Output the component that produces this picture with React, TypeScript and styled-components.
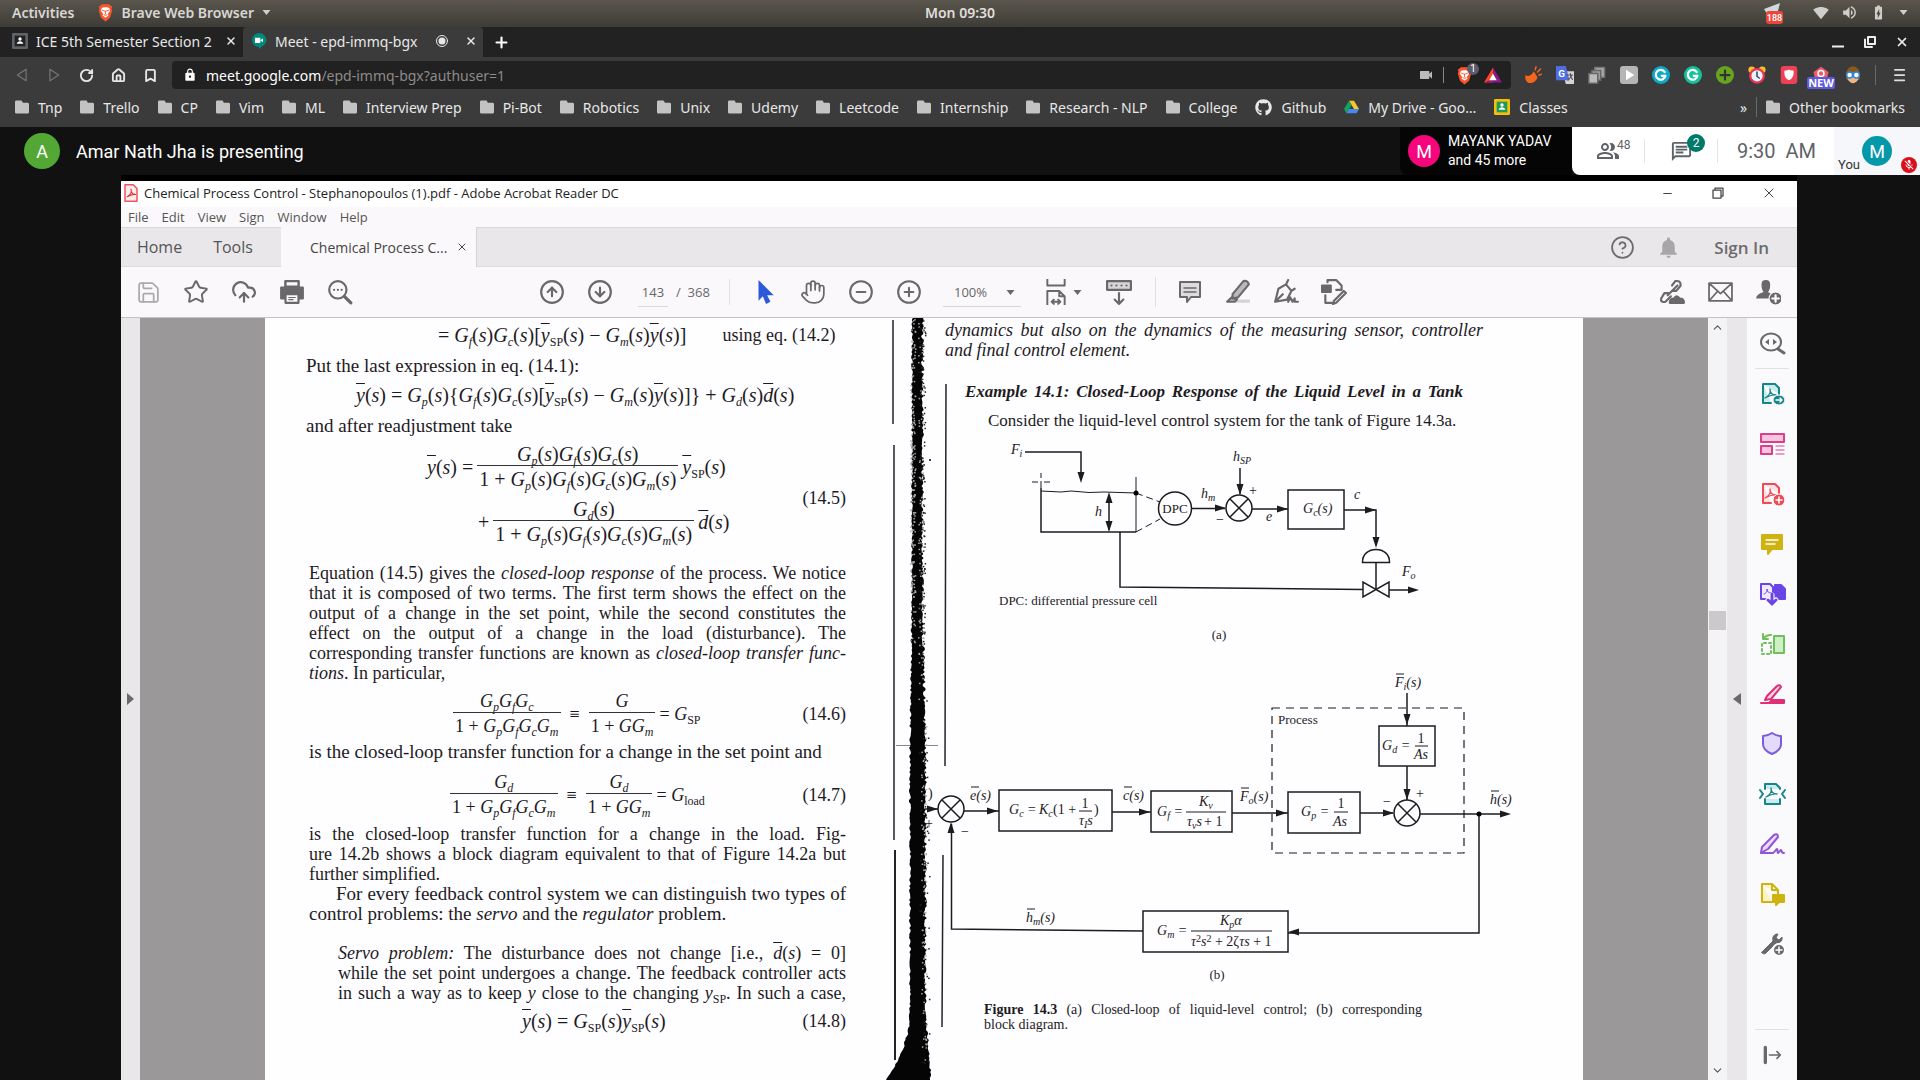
import React from "react";
import styled, { createGlobalStyle } from "styled-components";
import { FaGithub } from "react-icons/fa";
import {
  MdOutlineChat, MdOutlinePeopleAlt, MdMicOff, MdVideocam, MdLock, MdNotifications,
  MdSignalWifi4Bar, MdVolumeUp, MdBatteryChargingFull,
} from "react-icons/md";
import {
  Save, Star, CloudUpload, CircleArrowUp, CircleArrowDown, Hand, CircleMinus, CirclePlus,
  CircleHelp, X, Minus, ChevronUp, ChevronDown, Plus, House, Bookmark, RotateCw,
} from "lucide-react";

const ui = `"Noto Sans", "Open Sans", sans-serif`;
const segoe = `"Open Sans", "Noto Sans", sans-serif`;
const roboto = `Roboto, "Liberation Sans", sans-serif`;
const serif = `"Liberation Serif", "Times New Roman", serif`;

const Global = createGlobalStyle`
  * { box-sizing: border-box; }
  body { margin: 0; background: #111; font-family: ${ui}; }
  button, input, select { font: inherit; color: inherit; }
  button { border: 0; padding: 0; margin: 0; background: none; cursor: pointer; }
  svg { display: block; flex: none; }
`;

const Screen = styled.div`
  display: flex; flex-direction: column; height: 100vh; overflow: hidden;
`;
const Row = styled.div<{ gap?: number }>`
  display: flex; align-items: center; gap: ${(p) => p.gap ?? 0}px;
`;
const Spacer = styled.div`flex: 1;`;

/* ---------- desktop bar ---------- */
const DesktopBar = styled.header`
  height: 27px; flex: none; display: grid; grid-template-columns: 1fr auto 1fr; align-items: center;
  padding: 0 12px 2px; background: linear-gradient(#5a564d, #3e3c37);
  color: #e0dfdc; font-size: 14px; font-weight: 600; white-space: nowrap;
`;
const DesktopSide = styled.div<{ end?: boolean }>`
  display: flex; align-items: center; gap: 24px; justify-content: ${(p) => (p.end ? "flex-end" : "flex-start")};
  color: #d8d7d4;
`;
const DesktopApp = styled.button`display: flex; align-items: center; gap: 8px; font-weight: 600;`;
const DesktopButton = styled.button`font-weight: 600;`;
const Status = styled(Row)`color: #cfcecb;`;

/* ---------- browser chrome ---------- */
const TabStrip = styled.div`
  height: 30px; flex: none; display: flex; align-items: stretch; background: #222; color: #e8e8e8; font-size: 14px;
  white-space: nowrap;
`;
const Tab = styled.div<{ active?: boolean }>`
  width: ${(p) => (p.active ? 240 : 243)}px; display: flex; align-items: center; gap: 8px; padding: 0 6px 2px ${(p) => (p.active ? 8 : 12)}px;
  background: ${(p) => (p.active ? "#3b3b3b" : "transparent")}; border-radius: 4px 4px 0 0;
  button { display: flex; }
`;
const TabTitle = styled.span`flex: 1; overflow: hidden;`;
const NewTab = styled.button`width: 36px; display: grid; place-items: center; color: #fff;`;
const WindowControls = styled.div`
  margin-left: auto; display: flex; align-items: center; gap: 16px; padding-right: 10px;
  button { width: 16px; display: grid; place-items: center; color: #eee; }
`;
const NavBar = styled.nav`
  height: 36px; flex: none; display: flex; align-items: center; background: #3b3b3b; padding: 0 14px 0 14px; color: #ddd;
`;
const NavButton = styled.button<{ dim?: boolean }>`
  width: 16px; height: 28px; margin-right: 16px; display: grid; place-items: center; color: ${(p) => (p.dim ? "#777" : "#e6e6e6")};
`;
const AddressBar = styled.div`
  flex: 1; height: 28px; margin-left: -2px; display: flex; align-items: center; gap: 9px; padding: 0 9px 0 11px; background: #212121; border-radius: 4px;
  font-size: 14px; color: #fff;
`;
const Address = styled.label`
  flex: 1; display: grid; align-items: center;
  > * { grid-area: 1 / 1; }
  span { color: #8b8b8b; pointer-events: none; }
  b { color: #fff; font-weight: 400; }
`;
const AddressInput = styled.input`
  border: 0; outline: 0; background: transparent; padding: 0; color: transparent; width: 100%;
`;
const Rule = styled.i<{ h: number; c: string }>`
  width: 1px; height: ${(p) => p.h}px; background: ${(p) => p.c}; flex: none;
`;
const Extensions = styled.div`
  display: flex; align-items: center; gap: 14px; padding: 0 13px;
  button { width: 18px; height: 20px; display: grid; place-items: center; }
`;
const Shield = styled.button`
  position: relative; width: 22px; height: 22px; display: grid; place-items: center; color: #fb542b;
`;
const ShieldCount = styled.span`
  position: absolute; left: 14px; top: -1px; width: 12px; height: 12px; border-radius: 6px; background: #5d5b6b; color: #fff;
  font: 10px/12px ${roboto}; text-align: center;
`;
const NewTag = styled.span`
  position: absolute; left: -5px; bottom: -4px; width: 28px; height: 12px; border-radius: 2px; background: #5a59e0; color: #fff;
  font: 700 11px/12px ${ui}; text-align: center;
`;
const TagButton = styled.button`position: relative;`;
const BookmarkBar = styled.nav`
  height: 34px; flex: none; display: flex; align-items: center; padding: 0 15px 6px 15px; gap: 18px; background: #3b3b3b;
  color: #e8e8e8; font-size: 14px; white-space: nowrap;
`;
const BookmarkLink = styled.a`
  display: flex; align-items: center; gap: 9px; color: inherit; text-decoration: none;
`;

/* ---------- meeting bar ---------- */
const MeetBar = styled.section`
  height: 48px; flex: none; display: flex; align-items: center; padding-left: 24px; background: #111; font-family: ${roboto}; color: #fff;
`;
const Avatar = styled.span<{ size: number; tint: string }>`
  width: ${(p) => p.size}px; height: ${(p) => p.size}px; flex: none; border-radius: 50%; background: ${(p) => p.tint}; color: #fff;
  display: grid; place-items: center; font-size: 18px;
`;
const Presenter = styled.span`margin-left: 16px; font-size: 18px;`;
const Speaker = styled.div`
  margin-left: auto; width: 172px; height: 48px; display: flex; align-items: center; gap: 8px; padding-left: 8px; background: #050505;
  border-bottom-left-radius: 8px; font-size: 14px; line-height: 19px; white-space: nowrap;
`;
const MeetPanel = styled.div`
  height: 48px; display: flex; align-items: center; background: #fff; color: #5f6368; border-bottom-left-radius: 8px;
`;
const MeetButton = styled.button<{ w: number }>`
  position: relative; width: ${(p) => p.w}px; height: 48px; display: grid; place-items: center;
`;
const PeopleCount = styled.span`position: absolute; left: 45px; top: 10px; font-size: 12px; line-height: 16px;`;
const ChatCount = styled.span`
  position: absolute; left: 42px; top: 7px; width: 18px; height: 18px; border-radius: 9px; background: #00796b; color: #fff;
  font-size: 12px; line-height: 18px; text-align: center;
`;
const Clock = styled.time`width: 116px; padding-left: 19px; font-size: 20px; white-space: pre;`;
const SelfTile = styled.div`
  position: relative; width: 86px; height: 48px; display: flex; align-items: center; padding-left: 28px; background: #f5f7fa;
`;
const SelfName = styled.span`position: absolute; left: 4px; bottom: 1px; font-size: 13px; line-height: 18px; color: #333;`;
const Muted = styled.span`
  position: absolute; right: 3px; bottom: 2px; width: 16px; height: 16px; border-radius: 8px; background: #d90f1c; color: #fff;
  display: grid; place-items: center;
`;

/* ---------- PDF reader ---------- */
const Stage = styled.main`
  flex: 1; min-height: 0; display: flex; flex-direction: column; margin: 0 123px 0 121px; border-top: 6px solid #000;
  font-family: ${segoe}; color: #333; background: #faf8fb;
`;
const ReaderTitle = styled.div`
  height: 26px; flex: none; display: flex; align-items: center; gap: 6px; padding: 0 20px 2px 3px; background: #fff; font-size: 13px; color: #222;
`;
const ReaderControls = styled.div`
  margin-left: auto; display: flex; gap: 35px; color: #444;
  button { width: 16px; display: grid; place-items: center; }
`;
const MenuBar = styled.nav`
  height: 20px; flex: none; display: flex; align-items: center; gap: 13px; padding-left: 7px; font-size: 13px; color: #555;
`;
const ReaderTabs = styled.div`
  height: 40px; flex: none; display: flex; align-items: stretch; background: #e9e7ea; border-top: 1px solid #d9d7da; border-bottom: 1px solid #dddbde;
  font-size: 16px; color: #555; white-space: nowrap;
`;
const MainTab = styled.button<{ w: number }>`width: ${(p) => p.w}px; text-align: center;`;
const FileTab = styled.div`
  width: 196px; margin: -1px 0 -1px 13px; display: flex; align-items: center; justify-content: space-between; padding: 0 8px 0 29px;
  background: #faf8fb; border-right: 1px solid #d5d3d6; font-size: 14px; color: #444;
  button { display: flex; }
`;
const AccountArea = styled.div`
  margin-left: auto; display: flex; align-items: center; gap: 21px; padding-right: 28px; color: #6d6b6e; font-size: 17px; font-weight: 600;
  button { display: flex; }
  button:last-child { margin-left: 12px; }
`;
const Toolbar = styled.div`
  height: 51px; flex: none; display: flex; align-items: center; padding: 0 15px 0 13px; border-bottom: 1px solid #c4c2c5; color: #6a686b;
`;
const Tools = styled.div<{ left?: number }>`
  display: flex; align-items: center; gap: 20px; margin-left: ${(p) => p.left ?? 0}px;
  button { width: 28px; height: 28px; display: grid; place-items: center; }
`;
const PageBox = styled.label`
  display: flex; align-items: center; gap: 8px; margin-left: 24px; width: 91px; font-size: 13px; white-space: nowrap;
`;
const PageInput = styled.input`
  width: 30px; height: 30px; border: 0; border-bottom: 1px solid #ddd6dd; background: none; text-align: center; padding: 0; color: #666;
`;
const Zoom = styled.label`
  display: grid; align-items: center; width: 78px; margin: 0 22px 0 20px; font-size: 13px;
  > * { grid-area: 1 / 1; }
  svg { justify-self: end; pointer-events: none; margin-right: 6px; }
`;
const ZoomSelect = styled.select`
  appearance: none; height: 30px; border: 0; border-bottom: 1px solid #d8d5d9; background: none; padding: 0 0 0 11px; color: #666;
`;
const Body = styled.div`flex: 1; min-height: 0; display: flex; overflow: hidden;`;
const Rail = styled.button<{ w: number }>`
  width: ${(p) => p.w}px; flex: none; background: #eae7eb; display: grid; place-items: center;
`;
const Canvas = styled.div`
  flex: 1; min-width: 0; display: flex; justify-content: center; background: #9a9899; overflow: hidden;
`;
const ScrollTrack = styled.div`
  width: 19px; flex: none; display: flex; flex-direction: column; align-items: center; padding: 3px 0; background: #f4f3f5; color: #555;
`;
const ScrollThumb = styled.i`width: 17px; height: 19px; background: #cbc9cc; margin: 277px 0 auto;`;
const SideTools = styled.aside`
  width: 50px; flex: none; display: flex; flex-direction: column; align-items: center; background: #faf9fb; color: #6a686b;
  button { height: 50px; width: 50px; flex: none; display: grid; place-items: center; }
  hr { width: 34px; height: 1px; border: 0; margin: 0; background: #e2e0e3; flex: none; }
`;

/* ---------- scanned book ---------- */
const Book = styled.article`
  flex: 0 1 1318px; min-width: 0; display: flex; background: #fefdff; color: #1d1b1e; font: 18px/20px ${serif};
`;
const LeftPage = styled.section`width: 620px; flex: none; padding: 7px 39px 0 41px;`;
const RightPage = styled.section`width: 578px; flex: none; padding: 2px 40px 0 0;`;
const Para = styled.p<{ top?: number; indent?: number; size?: number }>`
  margin: ${(p) => p.top ?? 0}px 0 0 ${(p) => p.indent ?? 0}px; white-space: nowrap; font-size: ${(p) => p.size ?? 19}px;
`;
const Line = styled.span<{ full?: boolean; indent?: number }>`
  display: block; padding-left: ${(p) => p.indent ?? 0}px; text-align-last: ${(p) => (p.full ? "justify" : "left")};
`;
const Equation = styled.div<{ top: number; left: number; size?: number }>`
  display: flex; align-items: center; gap: 4px; margin-top: ${(p) => p.top}px; padding-left: ${(p) => p.left}px; white-space: nowrap;
  font-size: ${(p) => p.size ?? 18}px;
`;
const EqNote = styled.span`margin-left: 32px; font-size: 18px;`;
const EqNumber = styled.span`margin-left: auto; font-size: 18px;`;
const EqPair = styled.div`
  display: flex; align-items: center; justify-content: space-between;
  > ${EqNumber} { padding-top: 14px; }
`;
const Frac = styled.span`
  display: inline-flex; flex-direction: column; align-items: center; line-height: 22px;
  > :first-child { height: 22px; }
  > :last-child { border-top: 1px solid #333; padding: 2px 2px 0; align-self: stretch; text-align: center; height: 26px; }
`;
const Sub = styled.sub`font-size: 12px; line-height: 0; vertical-align: -4px;`;
const Over = styled.i`text-decoration: overline; text-decoration-thickness: 1px;`;
const Gap = styled.span<{ w: number }>`width: ${(p) => p.w}px;`;
const Heading = styled.h2`
  margin: 22px 0 0 20px; font: italic 700 17px/20px ${serif}; white-space: nowrap; width: 498px; text-align-last: justify;
`;
const Caption = styled.figcaption`
  margin: 2px 0 0 39px; width: 438px; font-size: 14px; line-height: 15px; white-space: nowrap;
`;
const Figure = styled.figure`margin: 0; svg { overflow: visible; font-family: ${serif}; }`;

const G = ({ s, arg }: { s?: string; arg?: boolean }) => (
  <><i>G</i>{s && <Sub>{s === "SP" || s === "load" ? s : <i>{s}</i>}</Sub>}{arg && <>(<i>s</i>)</>}</>
);
const Y = ({ sp }: { sp?: boolean }) => (<><Over>y</Over>{sp && <Sub>SP</Sub>}(<i>s</i>)</>);
const D = () => (<><Over>d</Over>(<i>s</i>)</>);

/* rough ink edge of the book gutter */
const noise = (n: number) => { const v = Math.sin(n * 127.1) * 43758.5453; return v - Math.floor(v); };
const gutterShape = () => {
  const left: string[] = [];
  const right: string[] = [];
  for (let y = 318; y <= 1080; y += 2) {
    const t = y > 1010 ? (y - 1010) / 70 : 0;
    const grow = Math.min(1, Math.max(0, (y - 600) / 150));
    left.push(`${(911 - grow * 2 - t * t * 24 + noise(y) * 2).toFixed(1)},${y}`);
    right.unshift(`${(921 + grow * 3 + t * 5 + noise(y + 0.5) * 3).toFixed(1)},${y}`);
  }
  return [...left, ...right].join(" ");
};
const specks = Array.from({ length: 520 }, (_, i) => {
  const y = 318 + noise(i + 3) * (i % 2 ? 750 : 330);
  const light = i % 3 !== 0;
  return { x: light ? 910 + noise(i * 2.3) * 5 + (i % 2) * (y > 700 ? 11 : 8) : 919 + noise(i * 3.7) * (y > 700 ? 10 : 6), y, light };
});
const Gutter = () => (
  <svg width="60" height="762" viewBox="885 318 60 762" overflow="visible" aria-hidden="true">
    <g stroke="#242226" strokeWidth="1.500" fill="none">
      <path d="M893 320V424M894 445V840" />
      <path d="M895 850V1060" strokeWidth="2" />
      <path d="M946 384 945 766M943 855 942 1027" />
      <path d="M896 745.500H938" strokeWidth="1" stroke="#888" />
    </g>
    <polygon points={gutterShape()} fill="#060506" />
    {specks.map((s, i) => <rect key={i} x={s.x} y={s.y} width="1.500" height="1.500" fill={s.light ? "#aaa" : "#222"} />)}
    <circle cx="930" cy="460" r="1" />
  </svg>
);

/* maths label inside the diagrams */
const L = ({ x, y, v, s, r, bar, size = 14 }: { x: number; y: number; v: string; s?: string; r?: string; bar?: boolean; size?: number }) => (
  <>
    <text x={x} y={y} fontSize={size} fontStyle="italic">
      {v}{s && <tspan dy="3" fontSize="10">{s}</tspan>}{r && <tspan dy={s ? -3 : 0}>{r}</tspan>}
    </text>
    {bar && <path d={`M${x + 1} ${y - 13}h8`} stroke="#1d1b1e" />}
  </>
);
const R = ({ x, y, children, size = 14, mid }: { x: number; y: number; children: React.ReactNode; size?: number; mid?: boolean }) => (
  <text x={x} y={y} fontSize={size} textAnchor={mid ? "middle" : "start"}>{children}</text>
);
const Head = ({ x, y, a = 0 }: { x: number; y: number; a?: number }) => (
  <path d="M0 0-11-3.500V3.500Z" fill="#1d1b1e" transform={`translate(${x} ${y}) rotate(${a})`} />
);
const Junction = ({ x, y }: { x: number; y: number }) => (
  <g><circle cx={x} cy={y} r="13" fill="#fefdff" /><path d={`M${x - 9} ${y - 9}l18 18m0-18l-18 18`} /></g>
);
const Diagram = () => (
  <svg width="570" height="569" viewBox="945 431 570 569" role="img" aria-label="Closed-loop liquid-level control">
    <g fill="none" stroke="#1d1b1e" strokeWidth="1.500">
      <path d="M1025 452H1081V475M1041 488V532H1136M1109 496V530M1120 532V587L1363 589.500" />
      <path d="M1136 477V532M1041 473v5m0 3v7M1032 482h6m6 0h6" strokeWidth="1" />
      <path d="M1041 491l20 1 10-1 18 1.500 15-.5 32 1" strokeWidth="1" />
      <path d="M1136 493l24 9M1136 532l24-13" strokeDasharray="7 4" strokeWidth="1" />
      <circle cx="1175" cy="508.500" r="16.500" />
      <path d="M1192 508.500H1225M1240 468V494M1252 509H1288M1344 510H1376V545M1376 562V590M1389 590H1415" />
      <rect x="1288" y="490" width="56" height="39" />
      <path d="M1362.500 562.500C1362 545 1390 545 1389.500 562.500ZM1363 582v15l26-15v15Z" />
      <Junction x={1239} y={508} />
      {/* block diagram */}
      <path d="M1272 708H1464V853H1272Z" strokeDasharray="8 6" strokeWidth="1.200" />
      <path d="M1407 693V726M1407 766V800M964 811H999M1112 812H1151M1232 813H1288M1360 813H1393M1420 814H1505M1479 814V933H1288M1143 931L951.500 929V824M925 809H938" />
      <rect x="1379" y="726" width="56" height="40" />
      <rect x="999" y="790" width="113" height="41" />
      <rect x="1151" y="791" width="81" height="41" />
      <rect x="1288" y="792" width="72" height="41" />
      <rect x="1143" y="911" width="145" height="41" />
      <Junction x={951} y={809} />
      <Junction x={1407} y={813} />
      <path d="M1415 746h13M1079 811h13M1186 812h40M1334 812h14M1191 931h81" strokeWidth="1" />
    </g>
    <circle cx="1136" cy="493" r="2.500" /><circle cx="1479" cy="814" r="2.500" />
    <Head x={1081} y={483} a={90} /><Head x={1109} y={492} a={-90} /><Head x={1109} y={532} a={90} />
    <Head x={1226} y={508} /><Head x={1240} y={495} a={90} /><Head x={1288} y={509} /><Head x={1376} y={510} />
    <Head x={1376} y={548} a={90} /><Head x={1419} y={590} /><Head x={1407} y={725} a={90} /><Head x={1407} y={800} a={90} />
    <Head x={998} y={811} /><Head x={1150} y={812} /><Head x={1287} y={813} /><Head x={1394} y={813} /><Head x={1511} y={814} />
    <Head x={1288} y={932} a={180} /><Head x={951} y={822} a={-90} /><Head x={938} y={809} />
    <g fill="#1d1b1e">
      <L x={1011} y={454} v="F" s="i" /><L x={1095} y={516} v="h" /><L x={1233} y={461} v="h" s="SP" />
      <L x={1201} y={498} v="h" s="m" /><L x={1266} y={521} v="e" /><L x={1354} y={499} v="c" />
      <L x={1303} y={513} v="G" s="c" r="(s)" /><L x={1402} y={576} v="F" s="o" />
      <R x={1175} y={513} size={13} mid>DPC</R>
      <R x={1249} y={495}>+</R><R x={1216} y={524}>−</R>
      <R x={999} y={605} size={13}>DPC: differential pressure cell</R>
      <R x={1219} y={639} size={13} mid>(a)</R>
      <R x={1278} y={724} size={13}>Process</R>
      <R x={1416} y={798}>+</R><R x={1383} y={806}>−</R><R x={961} y={836}>−</R>
      <R x={928} y={798}>)</R><R x={925} y={828}>+</R>
      <R x={1217} y={979} size={13} mid>(b)</R>
      <L x={1382} y={750} v="G" s="d" r=" =" /><R x={1421} y={743} mid>1</R><L x={1414} y={759} v="As" />
      <L x={1009} y={814} v="G" s="c" r=" = " /><L x={1039} y={814} v="K" s="c" /><R x={1053} y={814}>(1 +</R>
      <R x={1085} y={808} mid>1</R><L x={1079} y={825} v="τ" s="I" r="s" /><R x={1094} y={814}>)</R>
      <L x={1157} y={816} v="G" s="f" r=" =" /><L x={1199} y={806} v="K" s="v" /><L x={1187} y={826} v="τ" s="v" r="s" /><R x={1204} y={826}>+ 1</R>
      <L x={1301} y={816} v="G" s="p" r=" =" /><R x={1341} y={808} mid>1</R><L x={1333} y={826} v="As" />
      <L x={1157} y={935} v="G" s="m" r=" =" /><L x={1220} y={925} v="K" s="p" r="α" />
      <text x="1191" y="946" fontSize="14"><tspan fontStyle="italic">τ</tspan><tspan dy="-4" fontSize="10">2</tspan><tspan dy="4" fontStyle="italic">s</tspan><tspan dy="-4" fontSize="10">2</tspan><tspan dy="4"> + 2ζ</tspan><tspan fontStyle="italic">τs</tspan> + 1</text>
      <L bar x={1395} y={687} v="F" s="i" r="(s)" /><L bar x={970} y={800} v="e" r="(s)" /><L bar x={1123} y={800} v="c" r="(s)" />
      <L bar x={1240} y={801} v="F" s="o" r="(s)" /><L bar x={1490} y={804} v="h" r="(s)" /><L bar x={1026} y={922} v="h" s="m" r="(s)" />
    </g>
  </svg>
);

/* ---------- small drawings ---------- */
const Ico = ({ children, w = 18, h = w, box = "0 0 24 24", label }: { children: React.ReactNode; w?: number; h?: number; box?: string; label?: string }) => (
  <svg width={w} height={h} viewBox={box} fill="none" stroke="currentColor" strokeWidth="2" strokeLinejoin="round" strokeLinecap="round" aria-label={label}>{children}</svg>
);
const Disc = ({ c, children }: { c: string; children: React.ReactNode }) => (
  <Ico><circle cx="12" cy="12" r="12" fill={c} stroke="none" />{children}</Ico>
);
const Caret = ({ tint = "#6a686b" }: { tint?: string }) => <svg width="9" height="5" viewBox="0 0 8 5" fill={tint}><path d="M0 0h8L4 5Z" /></svg>;
const Brave = () => (
  <Ico w={15} h={19} box="0 0 20 24" label="Brave">
    <path d="M5 1h10l2 2 2 1-1 3 1 2-3 10-6 5-6-5L1 9l1-2-1-3 2-1Z" fill="#fb542b" stroke="none" />
    <path d="M5 6l3-1h4l3 1 1 4-3 4 1 2-4 3-4-3 1-2-3-4Z" fill="#fff" stroke="none" />
    <path d="M6 9l3 1.200M14 9l-3 1.200M10 10v4M8 15l2 1 2-1" stroke="#fb542b" strokeWidth="1.200" />
  </Ico>
);
const Classroom = ({ frame, board }: { frame: string; board: string }) => (
  <Ico w={16} label="Classroom"><rect width="24" height="24" rx="2" fill={frame} stroke="none" /><path d="M4 4h16v16H4Z" fill={board} stroke="none" /><circle cx="12" cy="9" r="2.500" fill="#fff" stroke="none" /><path d="M7 16c1-5 9-5 10 0Z" fill="#fff" stroke="none" /></Ico>
);
const PdfMark = ({ x = 6, y = 7 }: { x?: number; y?: number }) => (
  <path d={`M${x} ${y + 9}c4-2 6-5 5-9c0 5 3 6 6 6c-4-1-7 1-11 3`} strokeWidth="1.300" />
);
const Folder = () => <svg width="14" height="14" viewBox="0 0 15 14" fill="#c3c3c3"><path d="M1.500 0H7l1.500 2.500h5Q15 2.500 15 4v8.500Q15 14 13.500 14h-12Q0 14 0 12.500v-11Q0 0 1.500 0Z" /></svg>;

const folders = ["Tnp", "Trello", "CP", "Vim", "ML", "Interview Prep", "Pi-Bot", "Robotics", "Unix", "Udemy", "Leetcode", "Internship", "Research - NLP", "College"];

const page = "M4 2h12l4 4v6M4 2v19h8";
const sideTools: [string, string, React.ReactNode][] = [
  ["Export PDF", "#16858a", <><path d={page} fill="#c9ecec" /><PdfMark /><ellipse cx="20" cy="18" rx="6" ry="5" fill="#16858a" stroke="#fff" strokeWidth="1" /><path d="M17 18h6m-2-2 2 2-2 2" stroke="#fff" strokeWidth="1.500" /></>],
  ["Edit PDF", "#d9408a", <><path d="M2 2h23v8H2ZM2 14h11v8H2Z" fill="#f9c4df" /><path d="M17 14h8m-8 4h8M17 22h8" strokeWidth="1.200" /></>],
  ["Create PDF", "#ee4a57", <><path d={page} fill="#fde3e5" /><PdfMark /><circle cx="20" cy="18" r="6" fill="#ee4a57" stroke="#fff" strokeWidth="1" /><path d="M17 18h6m-3-3v6" stroke="#fff" strokeWidth="1.500" /></>],
  ["Comment", "#cfb310", <><path d="M3 3h20v14H13l-4 5v-5H3Z" fill="#cfb310" /><path d="M7 8h12M7 12h9" stroke="#fff" strokeWidth="1.500" /></>],
  ["Combine Files", "#6c46e5", <><path d="M2 2h9l3 3v12H2Z" fill="#efeaff" /><path d="M5 12c3-1 3-3 3-5 0 3 2 4 4 4" strokeWidth="1" /><path d="M16 3h6l4 4v10H16Z" fill="#6c46e5" /><path d="M13 13v9m-4-4 4 4 4-4" stroke="#fff" strokeWidth="5" /><path d="M13 12v10m-4-4 4 4 4-4" strokeWidth="3" /></>],
  ["Organize Pages", "#6ec05a", <><path d="M15 4h10v17H15Z" fill="#cdf0c4" /><path d="M12 11H3v11h9Z" strokeDasharray="2 3" /><path d="M12 3c-4 0-6 1-8 4M4 2v5h5" /></>],
  ["Redact", "#de2f77", <><path d="m8 14 10-10q3-2 4 1L12 17l-6 1Z" fill="#fbd3e3" /><path d="M2 21h23v-3H13l-3 3" fill="#de2f77" /></>],
  ["Protect", "#7b5be0", <path d="M13 1c3 2 6 3 9 3v8c0 5-4 8-9 10c-5-2-9-5-9-10V4c3 0 6-1 9-3Z" fill="#e3dbfc" />],
  ["Compress PDF", "#16858a", <><path d="M6 7V2h11l4 4v1M6 17v5h15v-5" fill="#c9ecec" /><PdfMark x={7} y={6} /><path d="m1 8 3 4L1 16M26 8l-3 4 3 4" /></>],
  ["Fill & Sign", "#9156d6", <><path d="m3 15 12-12q4-2 4 2L9 17l-7 4Z" fill="#ead9fa" /><path d="M2 21h12c2-1 3-4 4-4s0 4 1 4 2-3 3-3 0 3 3 3" /></>],
  ["Send for Comments", "#cfb310", <><path d="M3 2h10l6 6v4M3 2v18h10M13 2v6h6" fill="#fbf3c0" /><path d="M14 13h11v7h-5l-3 3v-3h-3Z" fill="#cfb310" /></>],
  ["More Tools", "#6a686b", <><path d="m3 20 11-11c-1-4 1-7 5-7l-2 4 3 2 3-3c1 4-3 7-6 6L7 21c-2 2-5 0-4-1Z" fill="#6a686b" strokeWidth="1" /><circle cx="20" cy="18" r="6" fill="#6a686b" stroke="#fff" /><path d="M17 18h6m-3-3v6" stroke="#fff" strokeWidth="1.500" /></>],
];
const Tint = styled.button<{ tint: string }>`color: ${(p) => p.tint};`;

export default function App() {
  return (
    <Screen>
      <Global />
      <DesktopBar>
        <DesktopSide>
          <DesktopButton>Activities</DesktopButton>
          <DesktopApp><Brave />Brave Web Browser<Caret tint="#cfcecb" /></DesktopApp>
        </DesktopSide>
        <span>Mon 09:30</span>
        <DesktopSide end>
          <Status gap={12}>
            <Ico w={20} h={24} box="0 0 20 24" label="188 messages"><path d="M1 8 17 2l-2 8-9 6Z" fill="#cdd8e0" stroke="none" /><rect x="3" y="10" width="17" height="13" rx="3" fill="#f04438" stroke="none" /><text x="11.500" y="20" fontSize="9" fill="#fff" stroke="none" textAnchor="middle" fontFamily="Roboto">188</text></Ico>
            <Gap w={6} />
            <MdSignalWifi4Bar size={16} /><MdVolumeUp size={17} /><MdBatteryChargingFull size={17} /><Caret tint="#cfcecb" />
          </Status>
        </DesktopSide>
      </DesktopBar>

      <TabStrip>
        <Tab>
          <Classroom frame="#5f6368" board="#222" />
          <TabTitle>ICE 5th Semester Section 2</TabTitle>
          <button aria-label="Close tab"><X size={12} strokeWidth={3} /></button>
        </Tab>
        <Tab active>
          <Ico w={16} label="Meet"><path d="M12 0a11 11 0 0 1 11 11c0 6-6 9-11 13v-3A10.500 10.500 0 0 1 12 0Z" fill="#00897b" stroke="none" /><path d="M6 7h8v8H6Zm8 4 4-3v6Z" fill="#fff" stroke="none" /></Ico>
          <TabTitle>Meet - epd-immq-bgx</TabTitle>
          <Ico w={12} label="Recording"><circle cx="12" cy="12" r="11" /><circle cx="12" cy="12" r="7" fill="currentColor" stroke="none" /></Ico>
          <Gap w={1} />
          <button aria-label="Close tab"><X size={12} strokeWidth={3} /></button>
        </Tab>
        <NewTab aria-label="New tab"><Plus size={17} strokeWidth={3} /></NewTab>
        <WindowControls>
          <button aria-label="Minimise"><Ico w={12}><path d="M1 21h22" strokeWidth="4" /></Ico></button>
          <button aria-label="Restore"><Ico w={12}><path d="M8 2h14v14H8ZM2 7v15h14" strokeWidth="4" /></Ico></button>
          <button aria-label="Close"><X size={14} strokeWidth={3} /></button>
        </WindowControls>
      </TabStrip>

      <NavBar>
        <NavButton dim aria-label="Back"><Ico w={14}><path d="M19 2v20L4 12Z" /></Ico></NavButton>
        <NavButton dim aria-label="Forward"><Ico w={14}><path d="M5 2v20l15-10Z" /></Ico></NavButton>
        <NavButton aria-label="Reload"><RotateCw size={15} strokeWidth={3} /></NavButton>
        <NavButton aria-label="Home"><House size={15} strokeWidth={3} /></NavButton>
        <NavButton aria-label="Bookmark"><Bookmark size={15} strokeWidth={3} /></NavButton>
        <AddressBar>
          <MdLock size={14} />
          <Address>
            <span><b>meet.google.com</b>/epd-immq-bgx?authuser=1</span>
            <AddressInput aria-label="Address" />
          </Address>
          <MdVideocam size={16} color="#bbb" />
          <Rule h={16} c="#888" />
          <Shield aria-label="Brave Shields"><Brave /><ShieldCount>1</ShieldCount></Shield>
          <Ico w={18} label="Brave Rewards"><path d="M12 2 0 22h12V14l-4 5 4-7Z" fill="#ff4724" stroke="none" /><path d="m12 2 12 20H0l7-3h10L12 10Z" fill="#8a1a8c" stroke="none" /><path d="m12 10 5 9H7Z" fill="#fff" stroke="none" /></Ico>
        </AddressBar>
        <Extensions>
          <button aria-label="Alarm bulb"><Ico><path d="M2 12c4 3 9 0 11-5l5 8c-2 7-9 9-13 7-3-2-4-6-3-10Z" fill="#f4661b" stroke="none" /><path d="m15 5 1-4m2 7 4-4m-2 8 3-1" stroke="#f4661b" /></Ico></button>
          <button aria-label="Translate"><Ico><path d="M9 7h15v17H13Z" fill="#d5d5d5" stroke="none" /><path d="M0 0h13l5 19H0Z" fill="#4f6fe0" stroke="none" /><text x="3" y="14" fontSize="13" fontWeight="700" fill="#fff" stroke="none" fontFamily="Roboto">G</text><path d="M15 12h7m-3-2c0 5 1 6 3 8m-1-5-5 6" stroke="#555" strokeWidth="1.500" /></Ico></button>
          <button aria-label="Tabs"><Ico><path d="M9 2h13v13H9Z" fill="#aaa" stroke="#777" /><path d="M5 6h12v13H5Z" fill="#9a9a9a" stroke="#666" /><path d="M1 10h12v13H1Z" fill="#bbb" stroke="#666" /></Ico></button>
          <button aria-label="Player"><Ico><rect width="24" height="24" rx="4" fill="#b5b5b5" stroke="none" /><path d="M8 5v14l11-7Z" fill="#fff" stroke="none" /></Ico></button>
          {["#0fa9c7", "#15c39a"].map((c) => (
            <button key={c} aria-label="Grammar"><Disc c={c}><path d="M17 8a6.500 6.500 0 1 0 1 5h-5" stroke="#fff" strokeWidth="3" /></Disc></button>
          ))}
          <button aria-label="Add"><Disc c="#68a51f"><path d="M12 6v12M6 12h12" stroke="#333" strokeWidth="3" /></Disc></button>
          <button aria-label="Alarm"><Ico><circle cx="5" cy="5" r="4.500" fill="#fbbd2c" stroke="none" /><circle cx="19" cy="5" r="4.500" fill="#fbbd2c" stroke="none" /><circle cx="12" cy="13" r="9" fill="#e8f3ff" stroke="#ef3355" strokeWidth="3" /><path d="M12 8v6l3 2" stroke="#345" /></Ico></button>
          <button aria-label="Pocket"><Ico><rect x="1" width="22" height="24" rx="4" fill="#ef4056" stroke="none" /><path d="M6 6c4 0 4-1 6-1s2 1 6 1c1 8-2 11-6 13C8 17 5 14 6 6Z" fill="#fff" stroke="none" /></Ico></button>
          <TagButton aria-label="New"><Ico><path d="M2 8l10-7 10 7-3 14H5Z" fill="#ef5a68" stroke="none" /><circle cx="12" cy="10" r="4" stroke="#fff" /></Ico><NewTag>NEW</NewTag></TagButton>
          <button aria-label="Profile"><Ico><path d="M3 11C3-3 21-3 21 11v7H3Z" fill="#8a5a1c" stroke="none" /><path d="M5 9h14v9q-7 10-14 0Z" fill="#f0b583" stroke="none" /><circle cx="7.500" cy="12" r="4" fill="#fff" stroke="#2a86d8" /><circle cx="16.500" cy="12" r="4" fill="#fff" stroke="#2a86d8" /></Ico></button>
        </Extensions>
        <Rule h={20} c="#6a6a6a" />
        <Gap w={16} />
        <button aria-label="Menu"><Ico w={14}><path d="M5 3h16M5 12h16M5 21h16" strokeWidth="3" /></Ico></button>
      </NavBar>

      <BookmarkBar>
        {folders.map((f) => <BookmarkLink href="#" key={f}><Folder />{f}</BookmarkLink>)}
        <BookmarkLink href="#"><FaGithub size={17} />Github</BookmarkLink>
        <BookmarkLink href="#">
          <svg width="15" height="14" viewBox="0 0 24 22"><path d="M8 1h8l8 13h-8Z" fill="#fbc42d" /><path d="M8 1l4 7L4 21 0 14Z" fill="#10a45c" /><path d="M8 14h16l-4 7H4Z" fill="#4688f4" /></svg>
          My Drive - Goo…
        </BookmarkLink>
        <BookmarkLink href="#"><Classroom frame="#f6bf0c" board="#1e9b57" />Classes</BookmarkLink>
        <Spacer />
        <Row gap={9}>
          <button aria-label="More bookmarks">»</button>
          <Rule h={20} c="#6a6a6a" />
          <BookmarkLink href="#"><Folder />Other bookmarks</BookmarkLink>
        </Row>
      </BookmarkBar>

      <MeetBar>
        <Avatar size={36} tint="#53a835">A</Avatar>
        <Presenter>Amar Nath Jha is presenting</Presenter>
        <Speaker><Avatar size={32} tint="#f6067c">M</Avatar><span>MAYANK YADAV<br />and 45 more</span></Speaker>
        <MeetPanel>
          <MeetButton w={72} aria-label="People"><MdOutlinePeopleAlt size={24} /><PeopleCount>48</PeopleCount></MeetButton>
          <Rule h={24} c="#e3e5e8" />
          <MeetButton w={72} aria-label="Chat"><MdOutlineChat size={23} /><ChatCount>2</ChatCount></MeetButton>
          <Rule h={24} c="#e3e5e8" />
          <Clock>9:30  AM</Clock>
          <SelfTile><SelfName>You</SelfName><Avatar size={30} tint="#0598a9">M</Avatar><Muted><MdMicOff size={12} /></Muted></SelfTile>
        </MeetPanel>
      </MeetBar>

      <Stage>
        <ReaderTitle>
          <Ico w={14} h={18} box="0 0 18 24"><path d="M1 1h11l5 5v17H1Z" stroke="#f0545c" fill="#fdecec" /><path d="M4 17c5-3 6-7 5-10 0 6 3 7 6 7-4-1-7 1-11 3" stroke="#e2323c" strokeWidth="1.500" /></Ico>
          Chemical Process Control - Stephanopoulos (1).pdf - Adobe Acrobat Reader DC
          <ReaderControls>
            <button aria-label="Minimise"><Minus size={13} /></button>
            <button aria-label="Restore"><Ico w={12}><path d="M2 6h16v16H2ZM6 6V2h16v16h-4" strokeWidth="2.500" /></Ico></button>
            <button aria-label="Close"><X size={16} strokeWidth={1.5} /></button>
          </ReaderControls>
        </ReaderTitle>
        <MenuBar>{["File", "Edit", "View", "Sign", "Window", "Help"].map((m) => <button key={m}>{m}</button>)}</MenuBar>
        <ReaderTabs>
          <MainTab w={77}>Home</MainTab>
          <MainTab w={70}>Tools</MainTab>
          <FileTab>Chemical Process C...<button aria-label="Close file"><X size={12} /></button></FileTab>
          <AccountArea>
            <button aria-label="Help"><CircleHelp size={25} strokeWidth={1.7} /></button>
            <button aria-label="Notifications"><MdNotifications size={25} color="#a8a6a9" /></button>
            <button>Sign In</button>
          </AccountArea>
        </ReaderTabs>
        <Toolbar>
          <Tools>
            <button aria-label="Save"><Save size={25} strokeWidth={1.7} color="#aba9ac" /></button>
            <button aria-label="Star"><Star size={26} strokeWidth={1.8} /></button>
            <button aria-label="Upload"><CloudUpload size={26} strokeWidth={2} /></button>
            <button aria-label="Print"><Ico w={26}><path d="M6 8V2h12v6M6 18H2V8h20v10h-4" fill="#6a686b" /><path d="M6 2h12v5H6ZM6 14h12v8H6Z" fill="#faf8fb" /><path d="M9 17h6m-6 2h4" strokeWidth="1" /></Ico></button>
            <button aria-label="Find"><Ico w={26}><circle cx="10" cy="10" r="8" /><path d="m16 16 6 6" strokeWidth="3" /><path d="M6.500 10h.1m3.400 0h.1m3.400 0h.1" /></Ico></button>
          </Tools>
          <Tools left={184}>
            <button aria-label="Previous page"><CircleArrowUp size={26} strokeWidth={2} /></button>
            <button aria-label="Next page"><CircleArrowDown size={26} strokeWidth={2} /></button>
          </Tools>
          <PageBox><PageInput aria-label="Page" defaultValue="143" /><span>/ &nbsp;368</span></PageBox>
          <Rule h={26} c="#e2e0e3" />
          <Tools left={21}>
            <button aria-label="Select"><Ico w={26}><path d="M6 1v19l4-4 3 7 4-2-3-6h6Z" fill="#2b59d8" stroke="none" /></Ico></button>
            <button aria-label="Pan"><Hand size={26} strokeWidth={1.6} /></button>
            <button aria-label="Zoom out"><CircleMinus size={26} strokeWidth={1.9} /></button>
            <button aria-label="Zoom in"><CirclePlus size={26} strokeWidth={1.9} /></button>
          </Tools>
          <Zoom><ZoomSelect aria-label="Zoom" defaultValue="100%"><option>100%</option></ZoomSelect><Caret /></Zoom>
          <Row gap={4}><button aria-label="Fit width"><Ico w={26}><path d="M4 0v6h16V0M4 24V11h11l5 5v8M15 11v5h5M8 21h8m-6-2-2 2 2 2m4-4 2 2-2 2" strokeWidth="1.800" /></Ico></button><Caret /></Row>
          <Tools left={23}><button aria-label="Scroll mode"><Ico w={26}><path d="M1 2h22v8H1Z" fill="#d7d5d8" /><path d="M5 6h.1m4.500 0h.1m4.600 0h.1m4.500 0h.1M12 13v10m-4-4 4 4 4-4" /></Ico></button></Tools>
          <Gap w={22} />
          <Rule h={30} c="#e2e0e3" />
          <Tools left={20}>
            <button aria-label="Comment"><Ico w={24}><path d="M2 2h20v15h-9l-4 5v-5H2Z" fill="#dddbde" /><path d="M6 8h12M6 12h12" strokeWidth="1.500" /></Ico></button>
            <button aria-label="Highlight"><Ico w={26}><path d="M9 22h14v-3H12Z" fill="#d5d3d6" stroke="none" /><path d="M7 14 17 2q4-1 5 3L12 17l-5 1ZM6 17l5 2-2 2H2Z" fill="#bbb9bc" /></Ico></button>
            <button aria-label="Sign"><Ico w={26}><path d="M2 21 5 9l7-4 5 6-4 8ZM2 21l7-7M12 5l2-4m3 10 3-2M14 21l2-4 2 4 2-3v3h3" /></Ico></button>
            <button aria-label="Stamp"><Ico w={26}><path d="M1 6h8v6H1Z" fill="#6a686b" /><path d="M6 3V1h8l5 5v4h-5M4 15v7h6M12 20l9-9 2 2-9 9-3 1Z" /></Ico></button>
          </Tools>
          <Spacer />
          <Tools>
            <button aria-label="Share link"><Ico w={26}><path d="m9 13-4 0-3 5q-1 4 4 3l5-5M8 15l9-9M12 6l3-4q5-1 5 4l-4 5-4 0" /><path d="M10 22q0-4 4-4 2-4 5 0 4 0 4 4Z" fill="#6a686b" /></Ico></button>
            <button aria-label="Mail"><Ico w={25}><path d="M1 3h22v17H1ZM2 4l10 9L22 4M2 19l7-8m13 8-7-8" strokeWidth="1.700" /></Ico></button>
            <button aria-label="Add person"><Ico w={26}><path d="M6 5q0-4 4-4t4 4q0 5-2 7l5 3v3H1q0-4 7-6-2-2-2-7Z" fill="#6a686b" stroke="none" /><circle cx="19" cy="18" r="6" fill="#6a686b" stroke="#faf8fb" strokeWidth="1" /><path d="M16 18h6m-3-3v6" stroke="#fff" /></Ico></button>
          </Tools>
        </Toolbar>
        <Body>
          <Rail w={19} aria-label="Open navigation pane"><Ico w={8} h={12} box="0 0 8 12"><path d="M0 0v12l7-6Z" fill="#6a686b" stroke="none" /></Ico></Rail>
          <Canvas>
            <Book>
              <LeftPage>
                <Equation top={0} left={132} size={20}>
                  <span>= <G s="f" arg /><G s="c" arg />[<Y sp /> − <G s="m" arg /><Y />]</span>
                  <EqNote>using eq. (14.2)</EqNote>
                </Equation>
                <Para top={11}>Put the last expression in eq. (14.1):</Para>
                <Equation top={9} left={50} size={20}>
                  <span><Y /> = <G s="p" arg />{"{"}<G s="f" arg /><G s="c" arg />[<Y sp /> − <G s="m" arg /><Y />]{"}"} + <G s="d" arg /><D /></span>
                </Equation>
                <Para top={11}>and after readjustment take</Para>
                <EqPair>
                  <div>
                    <Equation top={7} left={121} size={20}>
                      <span><Y /> =</span>
                      <Frac><span><G s="p" arg /><G s="f" arg /><G s="c" arg /></span><span>1 + <G s="p" arg /><G s="f" arg /><G s="c" arg /><G s="m" arg /></span></Frac>
                      <span><Y sp /></span>
                    </Equation>
                    <Equation top={7} left={172} size={20}>
                      <span>+</span>
                      <Frac><span><G s="d" arg /></span><span>1 + <G s="p" arg /><G s="f" arg /><G s="c" arg /><G s="m" arg /></span></Frac>
                      <span><D /></span>
                    </Equation>
                  </div>
                  <EqNumber>(14.5)</EqNumber>
                </EqPair>
                <Para top={17} indent={3} size={18}>
                  <Line full>Equation (14.5) gives the <i>closed-loop response</i> of the process. We notice</Line>
                  <Line full>that it is composed of two terms. The first term shows the effect on the</Line>
                  <Line full>output of a change in the set point, while the second constitutes the</Line>
                  <Line full>effect on the output of a change in the load (disturbance). The</Line>
                  <Line full>corresponding transfer functions are known as <i>closed-loop transfer func-</i></Line>
                  <Line><i>tions</i>. In particular,</Line>
                </Para>
                <Equation top={7} left={147}>
                  <Frac><span><G s="p" /><G s="f" /><G s="c" /></span><span>1 + <G s="p" /><G s="f" /><G s="c" /><G s="m" /></span></Frac>
                  <Gap w={1} />≡<Gap w={1} />
                  <Frac><span><G /></span><span>1 + <G /><G s="m" /></span></Frac>
                  <span>= <G s="SP" /></span>
                  <EqNumber>(14.6)</EqNumber>
                </Equation>
                <Para top={4} indent={3}>is the closed-loop transfer function for a change in the set point and</Para>
                <Equation top={9} left={144}>
                  <Frac><span><G s="d" /></span><span>1 + <G s="p" /><G s="f" /><G s="c" /><G s="m" /></span></Frac>
                  <Gap w={1} />≡<Gap w={1} />
                  <Frac><span><G s="d" /></span><span>1 + <G /><G s="m" /></span></Frac>
                  <span>= <G s="load" /></span>
                  <EqNumber>(14.7)</EqNumber>
                </Equation>
                <Para top={5} indent={3} size={18}>
                  <Line full>is the closed-loop transfer function for a change in the load. Fig-</Line>
                  <Line full>ure 14.2b shows a block diagram equivalent to that of Figure 14.2a but</Line>
                  <Line>further simplified.</Line>
                </Para>
                <Para indent={3}>
                  <Line full indent={27}>For every feedback control system we can distinguish two types of</Line>
                  <Line>control problems: the <i>servo</i> and the <i>regulator</i> problem.</Line>
                </Para>
                <Para top={19} indent={32} size={18}>
                  <Line full><i>Servo problem:</i> The disturbance does not change [i.e., <D /> = 0]</Line>
                  <Line full>while the set point undergoes a change. The feedback controller acts</Line>
                  <Line full>in such a way as to keep <i>y</i> close to the changing <i>y</i><Sub>SP</Sub>. In such a case,</Line>
                </Para>
                <Equation top={8} left={216} size={20}>
                  <span><Y /> = <G s="SP" arg /><Y sp /></span>
                  <EqNumber>(14.8)</EqNumber>
                </Equation>
              </LeftPage>
              <Gutter />
              <RightPage>
                <Para size={18}>
                  <Line full><i>dynamics but also on the dynamics of the measuring sensor, controller</i></Line>
                  <Line><i>and final control element.</i></Line>
                </Para>
                <Heading>Example 14.1: Closed-Loop Response of the Liquid Level in a Tank</Heading>
                <Para top={9} indent={43} size={17}>Consider the liquid-level control system for the tank of Figure 14.3a.</Para>
                <Figure>
                  <Diagram />
                  <Caption>
                    <Line full><b>Figure 14.3</b> (a) Closed-loop of liquid-level control; (b) corresponding</Line>
                    <Line>block diagram.</Line>
                  </Caption>
                </Figure>
              </RightPage>
            </Book>
          </Canvas>
          <ScrollTrack><ChevronUp size={13} /><ScrollThumb /><ChevronDown size={13} /></ScrollTrack>
          <Rail w={20} aria-label="Close tools pane"><Ico w={8} h={12} box="0 0 8 12"><path d="M8 0v12L0 6Z" fill="#6a686b" stroke="none" /></Ico></Rail>
          <SideTools>
            <button aria-label="Search tools"><Ico w={27} h={24} box="0 0 27 24"><ellipse cx="12" cy="11" rx="10" ry="8.500" /><path d="m19 18 6 4" strokeWidth="3" /><path d="M10 8v6l-4-3ZM14 8v6l4-3Z" fill="currentColor" stroke="none" /></Ico></button>
            <hr />
            {sideTools.map(([name, color, art]) => (
              <Tint key={name} aria-label={name} tint={color}><Ico w={27} h={24} box="0 0 27 24">{art}</Ico></Tint>
            ))}
            <Spacer />
            <hr />
            <button aria-label="Collapse"><Ico w={20}><path d="M4 3v18" strokeWidth="4" /><path d="M9 12h13m-4-4 4 4-4 4" /></Ico></button>
          </SideTools>
        </Body>
      </Stage>
    </Screen>
  );
}
